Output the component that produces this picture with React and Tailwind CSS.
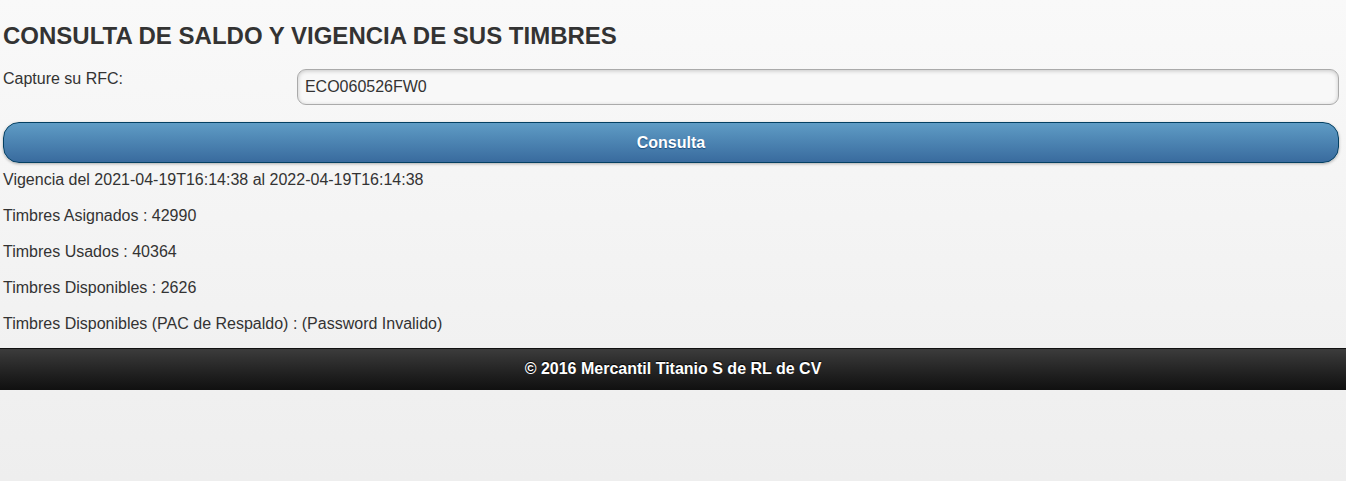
export default function App() {
  const lines = [
    'Vigencia del 2021-04-19T16:14:38 al 2022-04-19T16:14:38',
    'Timbres Asignados : 42990',
    'Timbres Usados : 40364',
    'Timbres Disponibles : 2626',
    'Timbres Disponibles (PAC de Respaldo) : (Password Invalido)',
  ];

  return (
    <div className="min-h-screen bg-gradient-to-b from-[#f9f9f9] to-[#eeeeee] text-[#333] font-['Liberation_Sans',Arial,sans-serif] text-[16px]">
      {/* Content */}
      <div className="pl-[3px] pr-[7px] pt-[22px]">
        <h2 className="text-[24px] leading-[28px] font-bold">
          CONSULTA DE SALDO Y VIGENCIA DE SUS TIMBRES
        </h2>

        <div className="mt-[19px] flex items-start justify-between">
          <label htmlFor="rfc" className="w-[20%] leading-[20px]">
            Capture su RFC:
          </label>
          <input
            id="rfc"
            type="text"
            defaultValue="ECO060526FW0"
            className="w-[78%] h-[36px] px-[7px] rounded-[9px] border border-[#aaa] bg-[#f8f8f8] text-[#333] text-[16px] shadow-[inset_0_1px_4px_rgba(0,0,0,0.2)] outline-none"
          />
        </div>

        <button
          type="button"
          className="mt-[17px] w-full h-[41px] rounded-[16px] border border-[#044062] bg-gradient-to-b from-[#5f9cc5] to-[#396b9e] text-white font-bold text-[16px] [text-shadow:0_1px_1px_#194b7e] shadow-[0_1px_3px_rgba(0,0,0,0.3)]"
        >
          Consulta
        </button>

        <div className="mt-[7px] flex flex-col gap-[16px] pb-[14px]">
          {lines.map((line) => (
            <p key={line} className="leading-[20px]">
              {line}
            </p>
          ))}
        </div>
      </div>

      {/* Footer */}
      <footer className="h-[42px] flex items-center justify-center border-y border-[#111] bg-gradient-to-b from-[#3c3c3c] to-[#111] text-white font-bold text-[16px] [text-shadow:0_-1px_1px_#000]">
        © 2016 Mercantil Titanio S de RL de CV
      </footer>
    </div>
  );
}
